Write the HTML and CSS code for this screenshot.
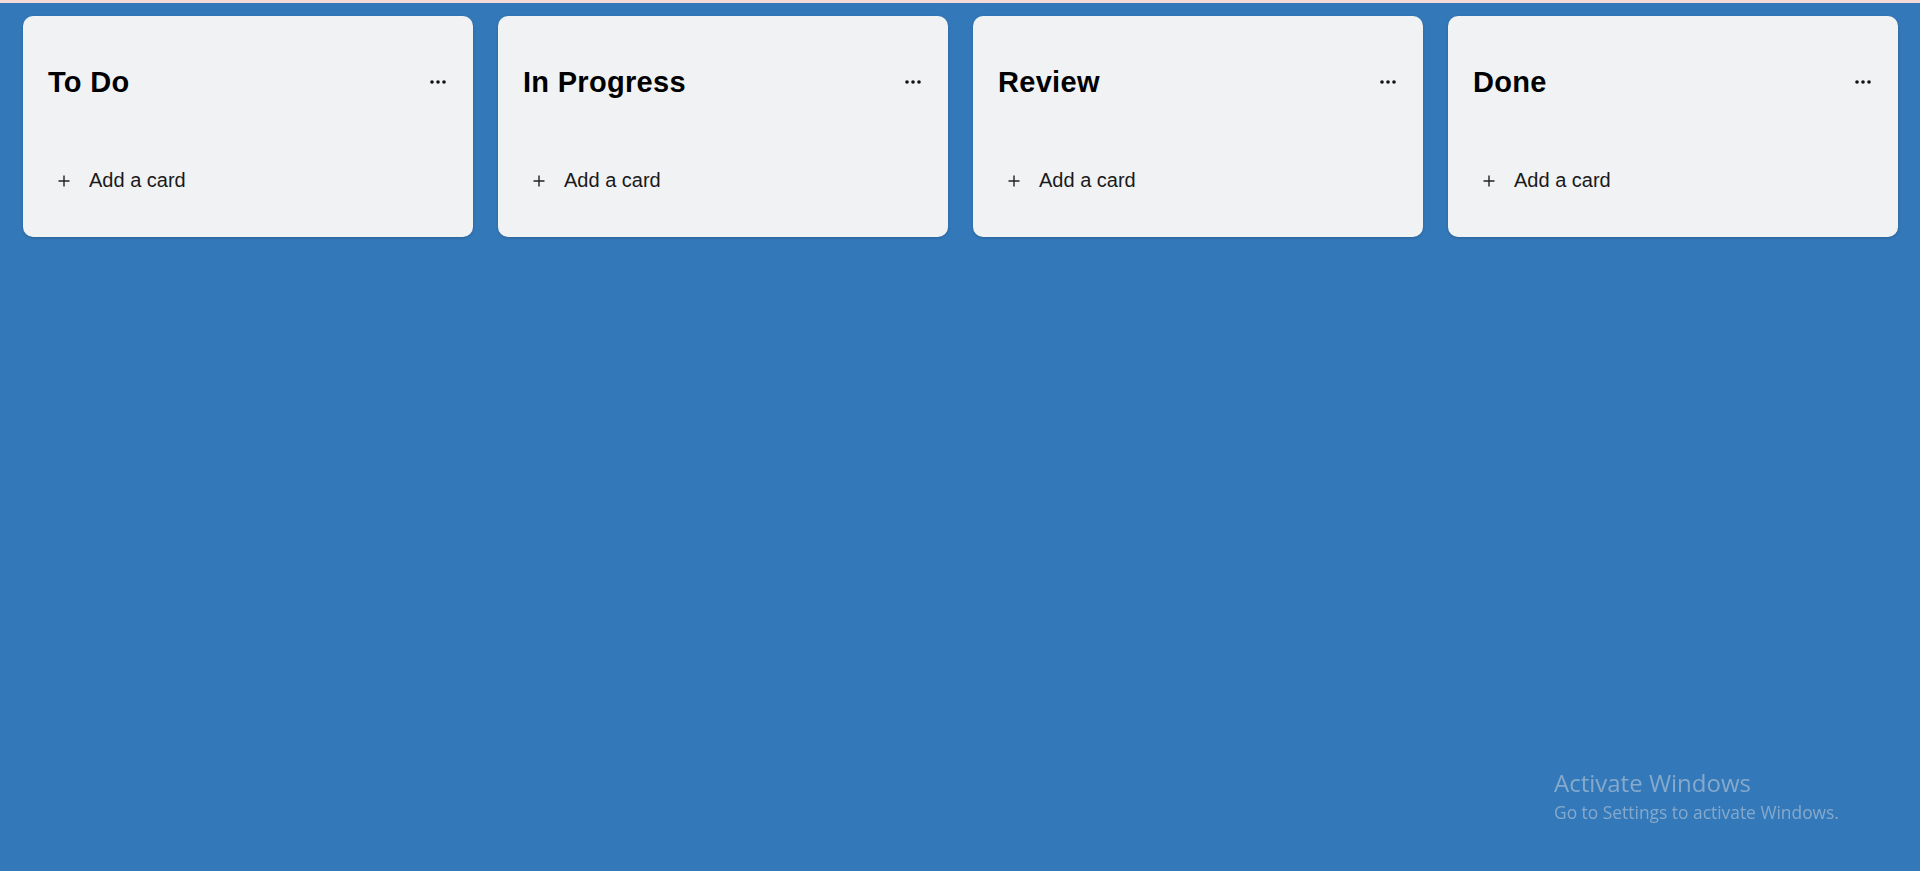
FILE: index.html
```html
<!DOCTYPE html>
<html lang="en">
<head>
<meta charset="utf-8">
<title>Board</title>
<link rel="stylesheet" href="styles.css">
</head>
<body>
<div class="topstrip"></div>
<main class="board">
  <section class="list">
    <header class="list-header">
      <h2 class="list-title">To Do</h2>
      <button class="menu-btn" aria-label="List actions"><svg width="16" height="4" viewBox="0 0 16 4"><circle cx="2" cy="2" r="1.8"/><circle cx="8" cy="2" r="1.8"/><circle cx="14" cy="2" r="1.8"/></svg></button>
    </header>
    <button class="add-card"><svg class="plus" width="12" height="12" viewBox="0 0 12 12"><path d="M6 0.5V11.5M0.5 6H11.5"/></svg><span>Add a card</span></button>
  </section>
  <section class="list">
    <header class="list-header">
      <h2 class="list-title">In Progress</h2>
      <button class="menu-btn" aria-label="List actions"><svg width="16" height="4" viewBox="0 0 16 4"><circle cx="2" cy="2" r="1.8"/><circle cx="8" cy="2" r="1.8"/><circle cx="14" cy="2" r="1.8"/></svg></button>
    </header>
    <button class="add-card"><svg class="plus" width="12" height="12" viewBox="0 0 12 12"><path d="M6 0.5V11.5M0.5 6H11.5"/></svg><span>Add a card</span></button>
  </section>
  <section class="list">
    <header class="list-header">
      <h2 class="list-title">Review</h2>
      <button class="menu-btn" aria-label="List actions"><svg width="16" height="4" viewBox="0 0 16 4"><circle cx="2" cy="2" r="1.8"/><circle cx="8" cy="2" r="1.8"/><circle cx="14" cy="2" r="1.8"/></svg></button>
    </header>
    <button class="add-card"><svg class="plus" width="12" height="12" viewBox="0 0 12 12"><path d="M6 0.5V11.5M0.5 6H11.5"/></svg><span>Add a card</span></button>
  </section>
  <section class="list">
    <header class="list-header">
      <h2 class="list-title">Done</h2>
      <button class="menu-btn" aria-label="List actions"><svg width="16" height="4" viewBox="0 0 16 4"><circle cx="2" cy="2" r="1.8"/><circle cx="8" cy="2" r="1.8"/><circle cx="14" cy="2" r="1.8"/></svg></button>
    </header>
    <button class="add-card"><svg class="plus" width="12" height="12" viewBox="0 0 12 12"><path d="M6 0.5V11.5M0.5 6H11.5"/></svg><span>Add a card</span></button>
  </section>
</main>
<div class="activate">
  <div class="activate-title">Activate Windows</div>
  <div class="activate-sub">Go to Settings to activate Windows.</div>
</div>
</body>
</html>
```
FILE: styles.css
```css
html, body {
  margin: 0;
  padding: 0;
  height: 100%;
}
body {
  background: #3378b9;
  font-family: "Liberation Sans", Arial, sans-serif;
  color: #000;
  overflow: hidden;
}
.topstrip {
  height: 3px;
  background: #f3dcd7;
}
.board {
  display: grid;
  grid-template-columns: repeat(4, 450px);
  gap: 25px;
  padding: 13px 23px;
  align-items: start;
}
.list {
  background: #f0f2f4;
  border-radius: 10px;
  box-shadow: 0 1px 3px rgba(0, 0, 0, 0.18);
  height: 221px;
  box-sizing: border-box;
  padding: 0 27px 0 25px;
  display: flex;
  flex-direction: column;
}
.list-header {
  display: flex;
  align-items: center;
  justify-content: space-between;
  margin-top: 50px;
  height: 32px;
}
.list-title {
  margin: 0;
  font-size: 29px;
  font-weight: 700;
  line-height: 32px;
  letter-spacing: 0.3px;
  color: #000;
}
.menu-btn {
  border: 0;
  background: none;
  padding: 0;
  display: flex;
  align-items: center;
}
.menu-btn svg {
  fill: #111;
  display: block;
}
.add-card {
  border: 0;
  background: none;
  display: flex;
  align-items: center;
  gap: 19px;
  margin-top: 71px;
  padding: 0 0 0 10px;
  font-family: "Liberation Sans", Arial, sans-serif;
  font-size: 20px;
  line-height: 23px;
  color: #1a1a1a;
  align-self: flex-start;
}
.plus {
  stroke: #222;
  stroke-width: 1.4;
  fill: none;
  display: block;
  margin-top: 1px;
}
.activate {
  position: fixed;
  left: 1554px;
  top: 768px;
  color: rgba(200, 210, 220, 0.55);
  font-family: "Open Sans", "Noto Sans", sans-serif;
}
.activate-title {
  font-size: 24px;
  line-height: 30px;
}
.activate-sub {
  font-size: 17.4px;
  line-height: 24px;
  margin-top: 2px;
}
```
